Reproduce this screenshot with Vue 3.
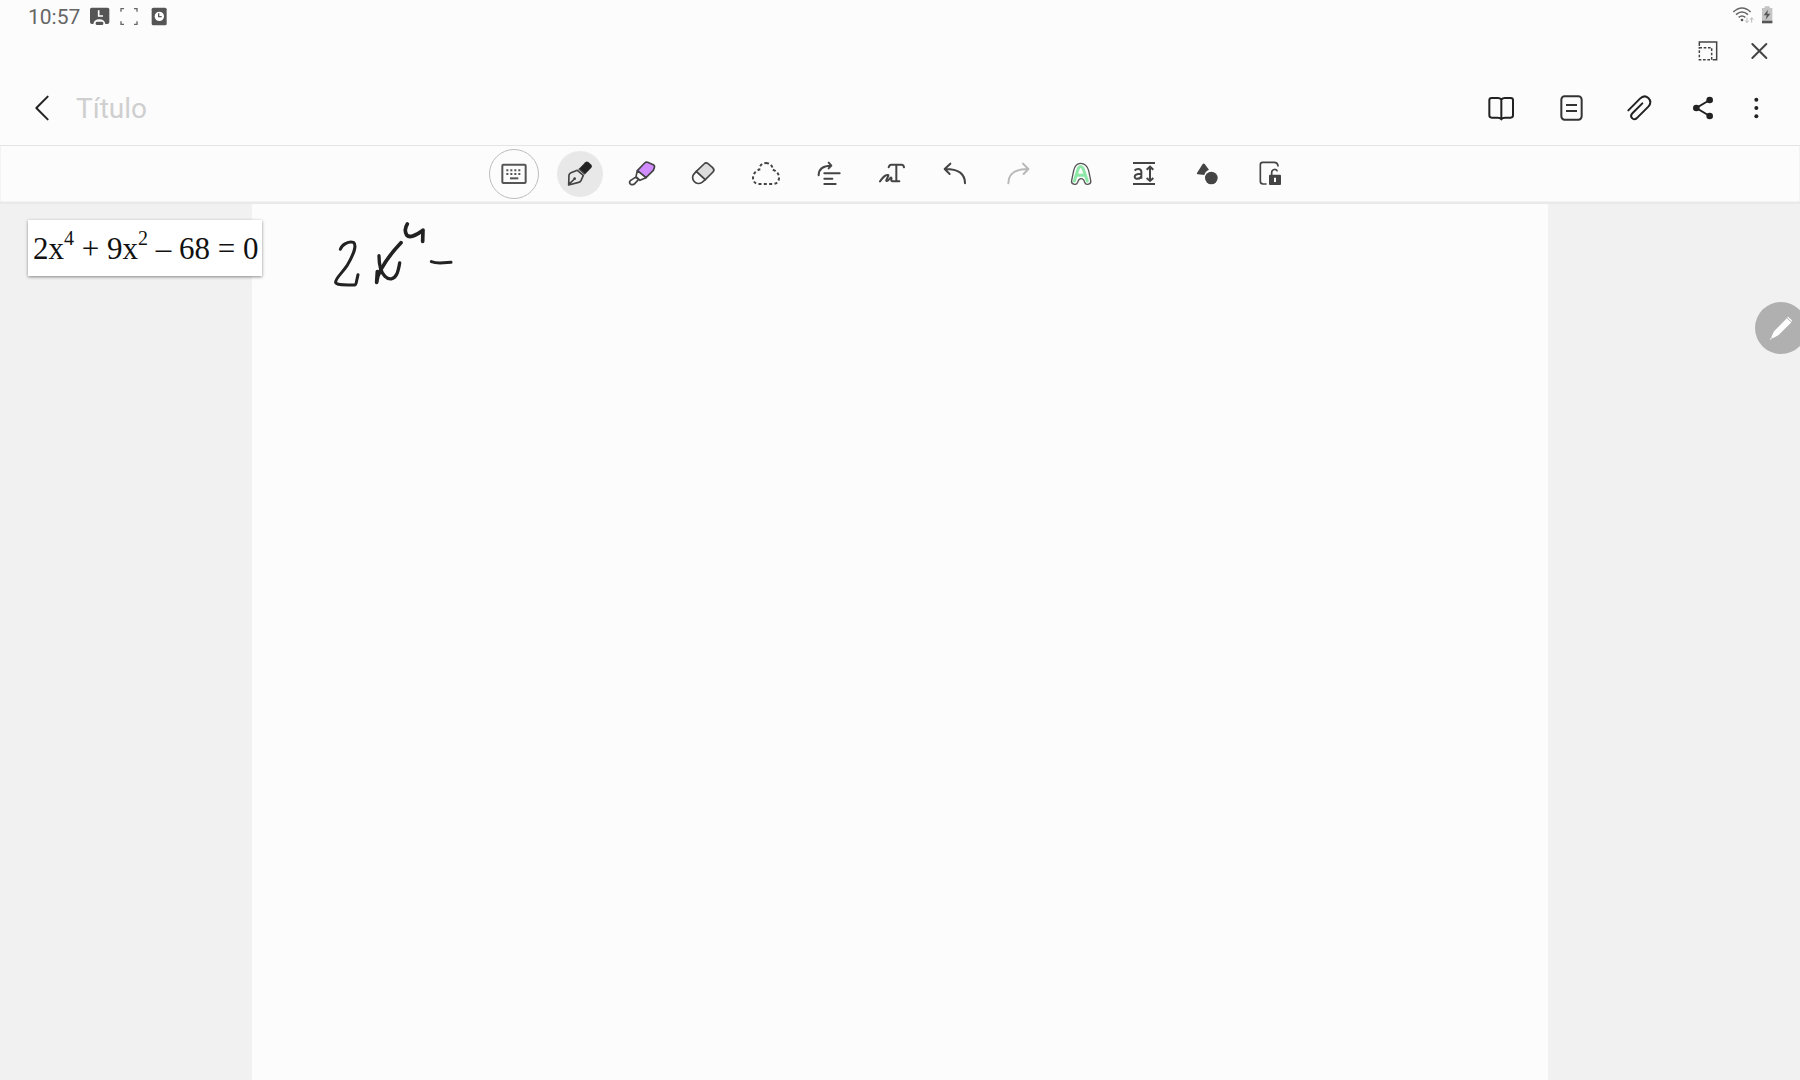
<template>
  <div class="notes">
    <header class="top">
      <div class="status">
        <span class="time">10:57</span>
        <svg class="status-icon" viewBox="264 15 66 66">
          <path fill="#555" d="M275 23h48q5 0 5 5v38q0 6-6 6h-6q-2-14-18-14t-18 14h-4q-6 0-6-6V28q0-5 5-5z" />
          <path fill="none" stroke="#fff" stroke-width="5" d="M296 31v17h13" />
          <rect x="287" y="65" width="23" height="10" rx="4" fill="#555" />
        </svg>
        <svg class="status-icon brackets" viewBox="354 15 66 66">
          <path fill="none" stroke="#666" stroke-width="4" d="M363 35v-9h9M402 26h9v9M411 64v9h-9M372 73h-9v-9" />
        </svg>
        <svg class="status-icon alarm" viewBox="443 15 66 66">
          <rect x="454" y="23" width="45" height="53" rx="5" fill="#555" />
          <circle cx="477" cy="49" r="14" fill="#fff" />
          <path fill="none" stroke="#555" stroke-width="4" d="M475 40v10h9" />
        </svg>
        <span class="spacer"></span>
        <svg class="wifi" viewBox="212 15 72 66">
          <g fill="none" stroke="#666" stroke-width="5">
            <path d="M219 36q26-24 52 0M227 44q18-16 36 0M235 52q10-8 20 0" />
            <path stroke="#bbb" stroke-width="3" d="M260 53v14m-5-5 5 6 5-6M274 68V54m-5 5 5-6 5 6" />
          </g>
          <circle cx="245" cy="60" r="4" fill="#555" />
        </svg>
        <svg class="battery" viewBox="299 15 42 66">
          <path fill="#c4c4c4" d="M305 24h8v-5h15v5h8v46h-31z" />
          <path fill="#555" d="M305 62h31v8h-31zM323 29l-13 17h9l-3 13 14-18h-9z" />
        </svg>
      </div>

      <div class="window-bar">
        <button aria-label="Janela">
          <svg viewBox="102 111 84 84">
            <g fill="none" stroke="#444" stroke-width="4.5">
              <path d="M118 138v-12h52v53h-12" />
              <path stroke-dasharray="8 5" d="M118 143h37v36h-37z" />
            </g>
          </svg>
        </button>
        <button aria-label="Fechar">
          <svg viewBox="255 111 84 84">
            <path fill="none" stroke="#444" stroke-width="6" stroke-linecap="round" d="M277 132l42 42M319 132l-42 42" />
          </svg>
        </button>
      </div>

      <div class="title-bar">
        <button class="back" aria-label="Voltar">
          <svg viewBox="84 282 84 84">
            <path fill="none" stroke="#222" stroke-width="6" stroke-linecap="round" stroke-linejoin="round" d="M143 290l-34 34 34 34" />
          </svg>
        </button>
        <input v-model="title" class="title" type="text" placeholder="Título" aria-label="Título" />
        <div class="actions">
          <button aria-label="Modo de leitura">
            <svg viewBox="84 72 84 84">
              <path fill="none" stroke="#222" stroke-width="6" stroke-linejoin="round" stroke-linecap="round" d="M124 89q-4-5-10-5H95q-7 0-7 7v45q0 7 7 7h18q8 0 11 5 3-5 11-5h17q7 0 7-7V91q0-7-7-7h-18q-6 0-10 5zv58" />
            </svg>
          </button>
          <button aria-label="Páginas">
            <svg viewBox="285 72 84 84">
              <rect x="304" y="79" width="61" height="70" rx="10" fill="none" stroke="#333" stroke-width="6" />
              <path stroke="#333" stroke-width="6" d="M318 105h33M318 123h33" />
            </svg>
          </button>
          <button aria-label="Anexar">
            <svg viewBox="6 72 84 84">
              <path fill="none" stroke="#222" stroke-width="6" stroke-linecap="round" d="M25 121l35-35c8-8 18-8 25-2 8 8 7 18 0 26l-33 33c-5 6-12 6-16 1-4-4-3-10 2-15l29-29" />
            </svg>
          </button>
          <button aria-label="Partilhar">
            <svg viewBox="207 72 84 84">
              <path fill="none" stroke="#222" stroke-width="6" d="M269 90l-40 24 40 24" />
              <g fill="#222">
                <circle cx="269" cy="90" r="10" />
                <circle cx="229" cy="114" r="10" />
                <circle cx="269" cy="138" r="10" />
              </g>
            </svg>
          </button>
          <button class="more" aria-label="Mais opções">
            <svg viewBox="366 72 84 84">
              <g fill="#222">
                <circle cx="409" cy="89" r="6" />
                <circle cx="409" cy="114" r="6" />
                <circle cx="409" cy="139" r="6" />
              </g>
            </svg>
          </button>
        </div>
      </div>
    </header>

    <nav class="toolbar">
      <button class="keyboard" aria-label="Teclado">
        <svg viewBox="60 60 84 84">
          <rect x="67" y="74" width="70" height="55" rx="3" fill="none" stroke="#555" stroke-width="6" />
          <path stroke="#555" stroke-width="6" stroke-dasharray="6 6" d="M79 91h44M79 102h44" />
          <path stroke="#555" stroke-width="6" d="M90 115h25" />
        </svg>
      </button>
      <button class="pen" :class="{ active: tool === 'pen' }" aria-label="Caneta" @click="tool = 'pen'">
        <svg viewBox="258 60 84 84">
          <path fill="#222" d="M297 86l19-19q4-4 9-1l9 8q4 4 0 9l-19 20z" />
          <path fill="none" stroke="#444" stroke-width="5" stroke-linejoin="round" d="M292 91l18 15-7 16q-2 4-7 5l-30 8 1-30q1-5 6-7zM266 134l17-17" />
          <path stroke="#444" stroke-width="4" d="M296 86l19 17" />
          <circle cx="284" cy="116" r="4" fill="#444" />
        </svg>
      </button>
      <div class="tools">
        <button :class="{ active: tool === 'marker' }" aria-label="Marcador" @click="tool = 'marker'">
          <svg viewBox="441 60 84 84">
            <g stroke="#444" stroke-width="5" stroke-linejoin="round">
              <path fill="#d18cff" d="M472 92l22-23q4-4 9-2l17 7q5 3 3 9l-3 8-22 22z" />
              <path fill="#fcfcfc" d="M472 92l-4 18 12 11 18-8zM466 112l-14 9q-6 6-1 11 8 5 14-2l11-12z" />
            </g>
          </svg>
        </button>
        <button :class="{ active: tool === 'eraser' }" aria-label="Borracha" @click="tool = 'eraser'">
          <svg viewBox="60 60 84 84">
            <g stroke="#444" stroke-width="5" stroke-linejoin="round">
              <path fill="#fcfcfc" d="M79 94l-8 9c-4 6-4 14 1 21 6 8 17 8 24 3l10-8z" />
              <path fill="#dcdcdc" d="M79 94l23-22q6-6 12-1l14 12q7 7 1 13l-23 23z" />
            </g>
          </svg>
        </button>
        <button :class="{ active: tool === 'lasso' }" aria-label="Seleção" @click="tool = 'lasso'">
          <svg viewBox="249 60 84 84">
            <path fill="none" stroke="#444" stroke-width="6" stroke-dasharray="9 7" d="M288 69c12 0 20 8 20 20 12 4 19 12 19 24 0 12-8 19-19 19h-41c-11 0-18-7-18-18s7-21 19-25c0-12 8-20 20-20z" />
          </svg>
        </button>
        <button aria-label="Endireitar">
          <svg viewBox="438 60 84 84">
            <g fill="none" stroke="#444" stroke-width="6" stroke-linecap="round" stroke-linejoin="round">
              <path d="M446 106c0-18 12-29 37-29M476 68l8 9-8 8" />
              <path d="M463 100h46M463 116h24M463 132h34" />
            </g>
          </svg>
        </button>
        <button aria-label="Escrita em texto">
          <svg viewBox="57 60 84 84">
            <g fill="none" stroke="#444" stroke-width="6" stroke-linejoin="round" stroke-linecap="round">
              <path d="M86 82q2-8 8-8h31q6 0 7 8M109 75v49M100 124h18" />
              <path d="M60 124c8-11 15-21 24-19 5 2-7 13-5 18 5 3 13-13 15-10 3 3-4 9 3 11" />
            </g>
          </svg>
        </button>
        <button aria-label="Anular">
          <svg viewBox="246 60 84 84">
            <path fill="none" stroke="#444" stroke-width="6" stroke-linecap="round" stroke-linejoin="round" d="M315 130c0-28-18-43-59-43M271 71l-17 16 15 15" />
          </svg>
        </button>
        <button aria-label="Refazer" disabled>
          <svg viewBox="435 60 84 84">
            <path fill="none" stroke="#b8b8b8" stroke-width="6" stroke-linecap="round" stroke-linejoin="round" d="M445 130c0-28 18-43 59-43M489 71l16 16-14 15" />
          </svg>
        </button>
        <button aria-label="Estilo de escrita">
          <svg viewBox="54 60 84 84">
            <path fill="#fcfcfc" stroke="#555" stroke-width="4" stroke-linejoin="round" d="M92 70c13 0 20 8 24 22l6 29c3 12-14 17-18 6-2-7-4-11-11-11s-8 5-10 11c-4 11-21 6-18-6l6-29c3-14 10-22 21-22z" />
            <path fill="none" stroke="#8de8a8" stroke-width="9" stroke-linecap="round" stroke-linejoin="round" d="M73 123l12-38q7-11 14 0l13 38M80 106h24" />
          </svg>
        </button>
        <button aria-label="Alinhar escrita">
          <svg viewBox="243 60 84 84">
            <g fill="none" stroke="#444" stroke-width="6">
              <path d="M249 69h66M249 132h66" />
              <path d="M254 92c4-6 19-8 20 3v21M274 101c-12 0-20 2-20 9 0 9 18 8 20-2" />
              <path d="M300 81v41M290 89l10-9 10 9M290 114l10 9 10-9" />
            </g>
          </svg>
        </button>
        <button :class="{ active: tool === 'shapes' }" aria-label="Formas" @click="tool = 'shapes'">
          <svg viewBox="432 60 84 84">
            <path fill="#444" d="M441 99l17-27q3-3 6 0l13 17q-12 5-14 16l-20-2q-4-1-2-4z" />
            <circle cx="484" cy="114" r="19" fill="#444" />
          </svg>
        </button>
        <button aria-label="Bloquear tela">
          <svg viewBox="621 60 84 84">
            <path fill="none" stroke="#444" stroke-width="5" stroke-linecap="round" d="M684 78q-1-11-12-11h-34q-7 0-7 7v50q0 8 8 8h9" />
            <path fill="none" stroke="#444" stroke-width="5" d="M665 106v-8c0-12 15-12 17-4" />
            <path fill="#444" fill-rule="evenodd" d="M660 104h30q3 0 3 3v25q0 3-3 3h-30q-3 0-3-3v-25q0-3 3-3zm12 9v13h6v-13z" />
          </svg>
        </button>
      </div>
    </nav>

    <main class="workspace">
      <section class="page">
        <svg class="ink" viewBox="0 0 480 300" role="img" aria-label="2x⁴ −">
          <g fill="none" stroke="#222" stroke-linecap="round" stroke-linejoin="round">
            <path stroke-width="9" d="M91 133c4-14 24-25 39-21 12 8-1 40-19 70-18 27-36 38-34 51 4 9 33 6 56 7 5 0 6-6 7-13l4-18" />
            <path stroke-width="10" d="M207 152c0 24 6 50 18 62 12 12 27 10 35-6 5-10 7-22 9-34" />
            <path stroke-width="11" d="M273 113c-24 25-48 58-61 82-7 13-11 25-12 37M202 200l-2 32" />
            <path stroke-width="11" d="M292 57c-7 11-7 24-2 33 8 10 29 1 49-14M339 75l-1 34" />
            <path stroke-width="9" d="M364 170q10 4 26 4l33-2" />
          </g>
        </svg>
      </section>

      <div class="equation">2x<sup>4</sup> + 9x<sup>2</sup> – 68 = 0</div>

      <button class="float-pen" aria-label="Comando S Pen">
        <svg viewBox="201 103 84 84">
          <path fill="#fff" d="M264 111l12 11-3 7-38 38-17 9-9 5 5-9 8-17 37-38z" />
          <path stroke="#b0b0b0" stroke-width="3" d="M261 115l13 12M211 171l8 8" />
        </svg>
      </button>
    </main>
  </div>
</template>

<script setup>
import { ref } from 'vue'

const title = ref('')
const tool = ref('pen')
</script>

<style>
body {
  margin: 0;
  background-color: #fcfcfc;
}
</style>

<style scoped>
* {
  box-sizing: border-box;
}

.notes {
  display: flex;
  flex-direction: column;
  min-height: 100vh;
  font-family: Roboto, sans-serif;
  background-color: #fcfcfc;
}

button {
  display: flex;
  align-items: center;
  justify-content: center;
  padding: 0;
  border: 0;
  background: transparent;
  cursor: pointer;
}

button svg {
  flex: none;
  width: 28px;
  height: 28px;
  overflow: visible;
}

.top {
  border-bottom: 1px solid #e4e4e4;
}

.status {
  display: flex;
  align-items: center;
  height: 32px;
  padding: 0 26px 0 28px;
}

.time {
  width: 60px;
  padding-top: 2px;
  font-size: 21px;
  line-height: 24px;
  color: #666;
}

.status-icon {
  width: 22px;
  height: 22px;
}

.brackets,
.alarm {
  margin-left: 8px;
}

.spacer {
  flex: 1;
}

.wifi {
  width: 24px;
  height: 22px;
}

.battery {
  width: 14px;
  height: 22px;
  margin-left: 5px;
}

.window-bar {
  display: flex;
  justify-content: flex-end;
  gap: 19px;
  height: 38px;
  padding-right: 25px;
}

.window-bar button {
  width: 32px;
}

.title-bar {
  display: flex;
  align-items: center;
  height: 75px;
  padding: 0 34px 0 18px;
}

.back {
  width: 48px;
  height: 48px;
}

.title {
  flex: 1;
  min-width: 0;
  padding: 3px 10px 0;
  border: 0;
  outline: 0;
  font-family: inherit;
  font-size: 28px;
  line-height: 36px;
  color: #222;
  background: transparent;
}

.title::placeholder {
  color: #cfcfcf;
  opacity: 1;
}

.actions {
  display: flex;
  gap: 19px;
}

.actions button {
  width: 48px;
  height: 48px;
}

.actions .more {
  width: 20px;
}

.toolbar {
  display: flex;
  align-items: center;
  justify-content: center;
  height: 56px;
  padding-right: 17px;
  border: 1px solid #f3f3f3;
  border-top: 0;
}

.toolbar button {
  width: 46px;
  height: 46px;
  border-radius: 50%;
}

.toolbar .keyboard {
  width: 50px;
  height: 50px;
  border: 1px solid #bdbdbd;
}

.toolbar .pen {
  margin: 0 15px 0 18px;
}

.toolbar .active {
  background-color: #e8e8e8;
}

.tools {
  display: flex;
  gap: 17px;
}

.workspace {
  position: relative;
  flex: 1;
  display: flex;
  flex-direction: column;
  padding: 0 14%;
  border-top: 2px solid #e9e9e9;
  background-color: #f1f1f1;
  overflow: hidden;
}

.page {
  flex: 1;
  padding: 1px 0 0 58px;
  background-color: #fcfcfc;
}

.ink {
  display: block;
  width: 160px;
  height: 100px;
}

/* pinned note floating over the page */
.equation {
  position: absolute;
  top: 16px;
  left: 28px;
  padding: 2px 4px 0 5px;
  font-family: 'Liberation Serif', serif;
  font-size: 31px;
  line-height: 54px;
  color: #111;
  white-space: nowrap;
  background-color: #fff;
  box-shadow: 0 1px 3px rgba(0, 0, 0, 0.45);
}

.equation sup {
  font-size: 20px;
  line-height: 0;
  vertical-align: 14px;
}

.float-pen {
  position: absolute;
  top: 98px;
  right: -7px;
  width: 52px;
  height: 52px;
  border-radius: 50%;
  background-color: #b0b0b0;
}
</style>
